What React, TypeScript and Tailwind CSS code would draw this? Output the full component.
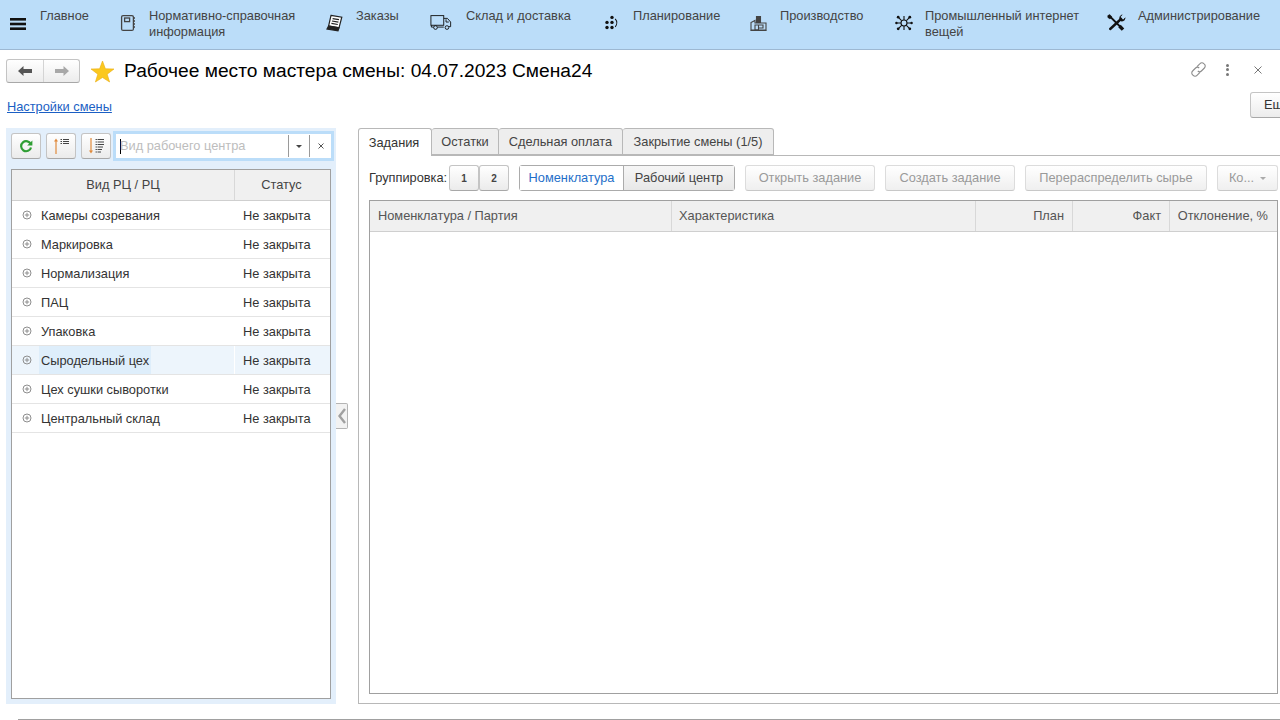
import type { ReactNode } from "react";

const IconMenu = () => (
  <svg width="17" height="14" viewBox="0 0 17 14" fill="#111">
    <rect x="0" y="1" width="16" height="2.6" />
    <rect x="0" y="5.7" width="16" height="2.6" />
    <rect x="0" y="10.4" width="16" height="2.6" />
  </svg>
);

const IconBook = () => (
  <svg width="16" height="18" viewBox="0 0 16 18" fill="none" stroke="#444" strokeWidth="1.3">
    <rect x="1.6" y="1.6" width="11.8" height="14.8" rx="1.5" />
    <rect x="4.6" y="4" width="5" height="3.6" />
    <path d="M13.5 4h1.5M13.5 7h1.5M13.5 10h1.5M13.5 13h1.5" />
  </svg>
);

const IconOrders = () => (
  <svg width="18" height="18" viewBox="0 0 18 18" fill="none" stroke="#222" strokeWidth="1.2">
    <path d="M5 1.4 15.8 3.2 13 13.8 2.6 12Z" fill="#fff" />
    <path d="M6.6 4.6 13 5.7M6 7 12.4 8.1M5.4 9.4 11.8 10.5" />
    <path d="M2.6 12 1 15 12 16.8 13 13.8Z" fill="#222" />
  </svg>
);

const IconTruck = () => (
  <svg width="22" height="17" viewBox="0 0 24 18" fill="none" stroke="#111" strokeWidth="1">
    <rect x="1" y="1.5" width="14" height="10.5" />
    <path d="M15 4.5h4l3.5 4v5h-2M15 14h-7M4 14H1.5v-2" />
    <path d="M17.5 5.5v3h3" />
    <circle cx="6" cy="14.5" r="2" />
    <circle cx="18.5" cy="14.5" r="2" />
  </svg>
);

const IconPlanning = () => (
  <svg width="16" height="18" viewBox="0 0 16 18" fill="#111">
    <circle cx="8" cy="3.4" r="1.7" />
    <circle cx="3" cy="8.4" r="1.7" />
    <circle cx="8" cy="8.4" r="1.7" />
    <circle cx="3" cy="13.5" r="1.7" />
    <circle cx="8" cy="13.5" r="1.7" />
    <path d="M11.2 4.8a6 6 0 0 1 0 8" fill="none" stroke="#111" strokeWidth="1.1" />
  </svg>
);

const IconFactory = () => (
  <svg width="17" height="18" viewBox="0 0 17 18" fill="none" stroke="#444" strokeWidth="1.1">
    <path d="M1 16V8.5L5 6.5V9h11v7Z" />
    <path d="M6.5 2.5h4v6h-4Z" fill="#444" />
    <path d="M0.5 16.5h16M5 11h3.5v5H5ZM8.5 11h4.5v3H8.5Z" />
  </svg>
);

const IconIot = () => (
  <svg width="18" height="18" viewBox="0 0 18 18" fill="none" stroke="#111" strokeWidth="1.1">
    <circle cx="9" cy="9" r="3" />
    <path d="M9 2V6M9 12v4M1.6 9H6M12 9h4.4M3.6 3.6l3 3M11.4 11.4l3 3M14.4 3.6l-3 3M6.6 11.4l-3 3" />
    <g fill="#111" stroke="none">
      <circle cx="3.2" cy="3.2" r="1.4" />
      <circle cx="14.8" cy="3.2" r="1.4" />
      <circle cx="3.2" cy="14.8" r="1.4" />
      <circle cx="14.8" cy="14.8" r="1.4" />
      <circle cx="1.4" cy="9" r="1.2" />
      <circle cx="16.6" cy="9" r="1.2" />
    </g>
  </svg>
);

const IconTools = () => (
  <svg width="19" height="18" viewBox="0 0 19 18" fill="none" stroke="#111">
    <path d="M3 2.5 15.5 15" strokeWidth="1.8" />
    <path d="M12.5 12 16 15.6" strokeWidth="3.4" />
    <path d="M0.8 1.6 2.8 0.6 5 3 3 5 0.8 3.4Z" fill="#111" strokeWidth="0.5" />
    <path d="M14 5 3.2 15" strokeWidth="2.4" strokeLinecap="round" />
    <path d="M15.2 0.8 13.6 2.6 14.4 5 16.6 5.6 18.2 3.8A3.6 3.6 0 0 1 14.4 7.2L12.8 5.6A3.6 3.6 0 0 1 15.2 0.8Z" fill="#111" strokeWidth="0.5" />
  </svg>
);

const IconRefresh = () => (
  <svg width="14" height="14" viewBox="0 0 14 14" fill="none">
    <path d="M11.8 5.4A5 5 0 1 0 12 8.4" stroke="#2f9e34" strokeWidth="2.2" />
    <path d="M13.4 1.4v5.2H8.2Z" fill="#2f9e34" />
  </svg>
);

const IconSortUp = () => (
  <svg width="17" height="16" viewBox="0 0 17 16" fill="none">
    <path d="M3 16V2" stroke="#e08a3c" strokeWidth="1.2" />
    <path d="M3 0.5 5 3.5H1Z" fill="#e08a3c" />
    <path d="M7.5 1.5h1.5M7.5 3.5h1.5M7.5 5.5h1.5" stroke="#444" />
    <path d="M10 1.5h6M10 3.5h6M10 5.5h6" stroke="#444" />
  </svg>
);

const IconSortDown = () => (
  <svg width="17" height="16" viewBox="0 0 17 16" fill="none">
    <path d="M3 0v13" stroke="#e08a3c" strokeWidth="1.2" />
    <path d="M3 15.5 5 12.5H1Z" fill="#e08a3c" />
    <path d="M7.5 1.5h2M7.5 4h2M7.5 6.5h2M7.5 9h2M7.5 11.5h2M7.5 14h2" stroke="#555" />
    <path d="M10 1.5h6M10 4h6M10 6.5h6M10 9h5M10 11.5h4M10 14h3" stroke="#444" />
  </svg>
);

const IconLink = () => (
  <svg width="17" height="17" viewBox="0 0 17 17" fill="none" stroke="#8c8c8c" strokeWidth="1.1">
    <path d="M7 5.6 10 2.6a2.6 2.6 0 0 1 3.8 0l.6.6a2.6 2.6 0 0 1 0 3.8l-3 3a2.6 2.6 0 0 1-3.6 0" />
    <path d="M10 11.4l-3 3a2.6 2.6 0 0 1-3.8 0l-.6-.6a2.6 2.6 0 0 1 0-3.8l3-3a2.6 2.6 0 0 1 3.6 0" />
  </svg>
);

const IconPlus = () => (
  <svg width="10" height="10" viewBox="0 0 10 10" fill="none" stroke="#8e8e8e">
    <circle cx="5" cy="5" r="4" />
    <path d="M2.8 5h4.4M5 2.8v4.4" />
  </svg>
);

const Caret = ({ color }: { color: string }) => (
  <svg width="6" height="3" viewBox="0 0 6 3" fill={color}>
    <path d="M0 0h6L3 3Z" />
  </svg>
);

const navItems = [
  { icon: null, label: "Главное", iconBox: "w-0", gap: "w-[0px]", left: "ml-[13px]", text: "w-[56px]" },
  { icon: <IconBook />, label: "Нормативно-справочная информация", iconBox: "w-[16px]", gap: "w-[13px]", left: "ml-[24px]", text: "w-[164px]" },
  { icon: <IconOrders />, label: "Заказы", iconBox: "w-[18px]", gap: "w-[12px]", left: "ml-[13px]", text: "w-[60px]" },
  { icon: <IconTruck />, label: "Склад и доставка", iconBox: "w-[24px]", gap: "w-[12px]", left: "ml-[14px]", text: "w-[124px]" },
  { icon: <IconPlanning />, label: "Планирование", iconBox: "w-[16px]", gap: "w-[13px]", left: "ml-[14px]", text: "w-[103px]" },
  { icon: <IconFactory />, label: "Производство", iconBox: "w-[17px]", gap: "w-[13px]", left: "ml-[14px]", text: "w-[100px]" },
  { icon: <IconIot />, label: "Промышленный интернет вещей", iconBox: "w-[18px]", gap: "w-[12px]", left: "ml-[15px]", text: "w-[167px]" },
  { icon: <IconTools />, label: "Администрирование", iconBox: "w-[19px]", gap: "w-[12px]", left: "ml-[15px]", text: "w-[130px]" },
];

const rows = [
  "Камеры созревания",
  "Маркировка",
  "Нормализация",
  "ПАЦ",
  "Упаковка",
  "Сыродельный цех",
  "Цех сушки сыворотки",
  "Центральный склад",
];

const tabs = [
  { label: "Остатки", width: "w-[67px]" },
  { label: "Сдельная оплата", width: "w-[124px]" },
  { label: "Закрытие смены (1/5)", width: "w-[151px]" },
];

const columns = [
  { label: "Номенклатура / Партия", width: "w-[302px]", align: "text-left pl-2" },
  { label: "Характеристика", width: "w-[304px]", align: "text-left pl-[7px]" },
  { label: "План", width: "w-[97px]", align: "text-right pr-2" },
  { label: "Факт", width: "w-[97px]", align: "text-right pr-2" },
  { label: "Отклонение, %", width: "w-[107px]", align: "text-right pr-[9px]" },
];

const ToolBtn = ({ children }: { children: ReactNode }) => (
  <button className="flex h-[26px] w-[30px] shrink-0 items-center justify-center rounded-[3px] border border-[#c4c4c4] border-b-[#a8a8a8] bg-gradient-to-b from-white to-[#ebebeb]">
    {children}
  </button>
);

const DisabledBtn = ({ children, width }: { children: ReactNode; width: string }) => (
  <button className={`flex h-[26px] ${width} items-center justify-center rounded-[3px] border border-[#dcdcdc] border-b-[#c8c8c8] bg-gradient-to-b from-white to-[#efefef] text-[#9a9a9a]`}>
    {children}
  </button>
);

export default function App() {
  return (
    <div className="relative flex h-[720px] w-[1280px] flex-col overflow-hidden bg-white font-['Liberation_Sans',Arial,sans-serif] text-[12.8px] text-[#3d3d3d]">
      {/* top sections */}
      <header className="flex h-[50px] shrink-0 border-b border-[#9db8d2] bg-[#bbddf9] pl-[10px]">
        <div className="mt-[17px]">
          <IconMenu />
        </div>
        {navItems.map((item) => (
          <div key={item.label} className={`flex ${item.left}`}>
            <div className={`${item.iconBox} mt-[14px] shrink-0`}>{item.icon}</div>
            <div className={`${item.gap} shrink-0`} />
            <div className={`${item.text} mt-[8px] shrink-0 leading-[16px] text-[#444]`}>{item.label}</div>
          </div>
        ))}
      </header>

      {/* title */}
      <div className="mt-[8px] flex h-[26px] shrink-0 items-center pl-[6px]">
        <div className="flex h-[24px] w-[74px] rounded-[3px] border border-[#c4c4c4] border-b-[#a8a8a8] bg-gradient-to-b from-white to-[#ececec]">
          <div className="flex w-[37px] items-center justify-center border-r border-[#d4d4d4]">
            <svg width="14" height="10" viewBox="0 0 14 10" fill="#555">
              <path d="M0 5 5.5 0v3H14v4H5.5v3Z" />
            </svg>
          </div>
          <div className="flex flex-1 items-center justify-center">
            <svg width="14" height="10" viewBox="0 0 14 10" fill="#a8a8a8">
              <path d="M14 5 8.5 0v3H0v4h8.5v3Z" />
            </svg>
          </div>
        </div>
        <svg className="ml-[10px]" width="25" height="23" viewBox="0 0 25 23" fill="#fbc81f" stroke="#e9ad12" strokeWidth="0.6">
          <path d="M12.5 1 15.4 8.8 24 9 17.2 14.2 19.6 22 12.5 17.5 5.4 22 7.8 14.2 1 9 9.6 8.8Z" />
        </svg>
        <h1 className="ml-[9px] text-[19.2px] leading-[24px] text-black">Рабочее место мастера смены: 04.07.2023 Смена24</h1>
        <div className="-mt-[3px] ml-auto flex items-center">
          <IconLink />
          <div className="ml-[19px] flex flex-col gap-[1.5px]">
            <span className="size-[3px] rounded-full bg-[#777]" />
            <span className="size-[3px] rounded-full bg-[#777]" />
            <span className="size-[3px] rounded-full bg-[#777]" />
          </div>
          <svg className="ml-[25px] mr-[18px]" width="8" height="8" viewBox="0 0 8 8" stroke="#777" strokeWidth="1">
            <path d="M0.5 0.5l7 7M7.5 0.5l-7 7" />
          </svg>
        </div>
      </div>

      {/* settings link and "more" */}
      <div className="mt-[8px] flex h-[26px] shrink-0 items-center pl-[7px]">
        <a className="mt-[4px] text-[#1b5fc4] underline">Настройки смены</a>
        <button className="-mr-[30px] ml-auto flex h-[26px] w-[60px] items-center justify-start rounded-[3px] border border-[#c4c4c4] border-b-[#a8a8a8] bg-gradient-to-b from-white to-[#ececec] pl-[13px] text-[#333]">
          Ещё
        </button>
      </div>

      {/* content */}
      <div className="mt-[10px] flex shrink-0 pl-[6px]">
        {/* left panel */}
        <div className="flex h-[576px] w-[330px] flex-col bg-[#e3effb] p-[5px]">
          <div className="flex h-[26px] shrink-0 items-center gap-[5px]">
            <ToolBtn>
              <IconRefresh />
            </ToolBtn>
            <ToolBtn>
              <IconSortUp />
            </ToolBtn>
            <ToolBtn>
              <IconSortDown />
            </ToolBtn>
            <div className="relative ml-[-3px] flex h-[30px] w-[221px] shrink-0 items-center border-[3px] border-[#bbddf9] bg-white">
              <span className="ml-[4px] h-[15px] w-px bg-black" />
              <span className="-ml-px flex-1 text-[#bdbdbd]">Вид рабочего центра</span>
              <span className="flex h-[22px] w-[21px] items-center justify-center border-l border-[#9a9a9a]">
                <Caret color="#444" />
              </span>
              <span className="flex h-[22px] w-[22px] items-center justify-center border-l border-[#9a9a9a]">
                <svg width="6" height="6" viewBox="0 0 6 6" stroke="#555">
                  <path d="M0.5 0.5l5 5M5.5 0.5l-5 5" />
                </svg>
              </span>
            </div>
          </div>
          <div className="mt-[10px] flex-1 border border-[#a0a0a0] bg-white">
            <div className="flex h-[31px] border-b border-[#cfcfcf] bg-[#f0f0f0] text-[#444]">
              <div className="flex w-[223px] items-center justify-center border-r border-[#d8d8d8]">Вид РЦ / РЦ</div>
              <div className="flex flex-1 items-center justify-center pr-[2px]">Статус</div>
            </div>
            {rows.map((row) => {
              const active = row === "Сыродельный цех";
              return (
                <div key={row} className={`flex h-[29px] border-b border-[#e4e4e4] ${active ? "bg-[#edf5fc]" : ""}`}>
                  <div className={`flex w-[223px] items-center pl-[10px] ${active ? "border-r border-white" : ""}`}>
                    <IconPlus />
                    <span className={`ml-[7px] flex h-full items-center px-[2px] pt-px text-[#333] ${active ? "bg-[#deeefb]" : ""}`}>{row}</span>
                  </div>
                  <div className="flex flex-1 items-center pl-[8px] pt-px text-[#333]">Не закрыта</div>
                </div>
              );
            })}
          </div>
        </div>

        {/* collapse handle */}
        <div className="flex h-[576px] w-[22px] shrink-0 items-center">
          <button className="flex h-[26px] w-[12px] items-center justify-center rounded-r-[2px] border border-l-0 border-[#b4b4b4] bg-[#f2f2f2]">
            <svg width="8" height="16" viewBox="0 0 8 16" fill="none" stroke="#a0a0a0" strokeWidth="2.4">
              <path d="M7 1 1.5 8 7 15" />
            </svg>
          </button>
        </div>

        {/* right panel */}
        <div className="flex h-[576px] w-[940px] shrink-0 flex-col">
          <div className="flex h-[28px] shrink-0">
            <div className="flex h-[28px] w-[74px] items-center justify-center rounded-t-[3px] border border-b-0 border-[#b8b8b8] bg-white pr-[2px] text-[#333]">
              Задания
            </div>
            <div className="flex flex-1 border-b border-[#b8b8b8]">
              {tabs.map((tab) => (
                <div key={tab.label} className={`flex h-[27px] ${tab.width} items-center justify-center rounded-t-[3px] border border-l-0 border-[#b8b8b8] bg-[#eeeeee] text-[#444]`}>
                  {tab.label}
                </div>
              ))}
            </div>
          </div>
          <div className="flex flex-1 flex-col border-b border-l border-[#b8b8b8] pl-[10px]">
            <div className="mt-[9px] flex h-[26px] items-center">
              <span className="w-[80px] text-[#333]">Группировка:</span>
              <button className="flex h-[26px] w-[30px] items-center justify-center rounded-[3px] border border-[#c4c4c4] border-b-[#a8a8a8] bg-gradient-to-b from-white to-[#ebebeb] text-[10px] font-bold text-[#444]">1</button>
              <button className="flex h-[26px] w-[30px] items-center justify-center rounded-[3px] border border-[#c4c4c4] border-b-[#a8a8a8] bg-gradient-to-b from-white to-[#ebebeb] text-[10px] font-bold text-[#444]">2</button>
              <div className="ml-[10px] flex h-[26px] w-[216px] rounded-[3px] border border-[#ababab]">
                <div className="flex w-[104px] items-center justify-center border-r border-[#ababab] bg-white text-[#1f6fc9]">Номенклатура</div>
                <div className="flex flex-1 items-center justify-center bg-gradient-to-b from-[#f6f6f6] to-[#e8e8e8] text-[#444]">Рабочий центр</div>
              </div>
              <div className="ml-[10px] flex gap-[10px]">
                <DisabledBtn width="w-[130px]">Открыть задание</DisabledBtn>
                <DisabledBtn width="w-[130px]">Создать задание</DisabledBtn>
                <DisabledBtn width="w-[182px]">Перераспределить сырье</DisabledBtn>
                <DisabledBtn width="w-[61px]">
                  <span>Ко...</span>
                  <span className="ml-[6px] flex">
                    <Caret color="#aaa" />
                  </span>
                </DisabledBtn>
              </div>
            </div>
            <div className="mb-[9px] mt-[9px] flex w-[909px] flex-1 flex-col border border-[#a0a0a0]">
              <div className="flex h-[31px] border-b border-[#cfcfcf] bg-[#f0f0f0]">
                {columns.map((col) => (
                  <div key={col.label} className={`${col.width} ${col.align} border-r border-[#d8d8d8] leading-[30px] text-[#555] last:border-r-0`}>
                    {col.label}
                  </div>
                ))}
              </div>
            </div>
          </div>
        </div>
      </div>

      {/* bottom divider */}
      <div className="absolute bottom-0 left-[18px] right-0 h-px bg-[#a0a0a0]" />
    </div>
  );
}
